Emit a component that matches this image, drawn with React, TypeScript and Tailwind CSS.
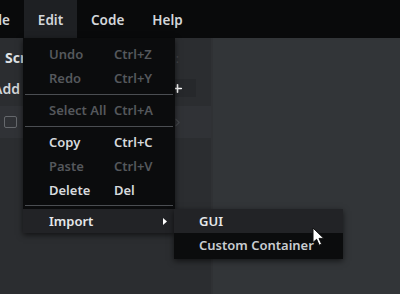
import { ChevronRight, Plus } from "lucide-react";

type MenuEntry =
  | { kind: "item"; label: string; shortcut?: string; disabled?: boolean }
  | { kind: "sep"; last?: boolean };

const editItems: MenuEntry[] = [
  { kind: "item", label: "Undo", shortcut: "Ctrl+Z", disabled: true },
  { kind: "item", label: "Redo", shortcut: "Ctrl+Y", disabled: true },
  { kind: "sep" },
  { kind: "item", label: "Select All", shortcut: "Ctrl+A", disabled: true },
  { kind: "sep" },
  { kind: "item", label: "Copy", shortcut: "Ctrl+C" },
  { kind: "item", label: "Paste", shortcut: "Ctrl+V", disabled: true },
  { kind: "item", label: "Delete", shortcut: "Del" },
  { kind: "sep", last: true }
];

function Cursor() {
  return (
    <svg width="14" height="20" viewBox="0 0 14 20" className="absolute left-[312px] top-[227px]">
      <path d="M1 1 L1 15.5 L4.6 12.3 L7.2 18.2 L9.6 17.1 L7 11.4 L11.8 11.4 Z" fill="#ffffff" stroke="#111" strokeWidth="1" strokeLinejoin="round" />
    </svg>
  );
}

export default function App() {
  return (
    <div className="relative h-[294px] w-[400px] overflow-hidden bg-[#323538] font-['Noto_Sans',sans-serif] text-[#d3d6da]">
      <div className="flex h-[38px] items-stretch bg-[#090a0b] text-[13.5px] font-semibold">
        <div className="ml-[-27px] flex w-[51px] items-center justify-center pt-[2px]">File</div>
        <div className="flex w-[53px] items-center justify-center bg-[#1e2023] pt-[2px]">Edit</div>
        <div className="flex items-center px-[14px] pt-[2px]">Code</div>
        <div className="flex items-center px-[14px] pt-[2px]">Help</div>
      </div>

      <div className="flex h-[256px]">
        <aside className="w-[211px] bg-[#2b2d30]">
          <div className="flex h-[31px] items-end justify-between pb-[1px] pl-[5px] pr-[32px]">
            <span className="text-[14px] font-bold text-[#dfe2e5]">Scripts</span>
            <span className="text-[12px] text-[#45484c]">:</span>
          </div>
          <div className="mt-[10px] flex h-[18px] items-center justify-between pr-[15px]">
            <span className="ml-[-7px] text-[14px] font-semibold">Add Script</span>
            <span className="flex h-[18px] w-[36px] items-center justify-end bg-[#26282b] pr-[12px] text-white">
              <Plus size={13} strokeWidth={3} />
            </span>
          </div>
          <div className="mt-[9px] flex h-[32px] items-center justify-between bg-[#303236] pl-[4px] pr-[27px]">
            <span className="h-[12px] w-[13px] rounded-[2px] border border-[#65686c]" />
            <ChevronRight size={13} className="text-[#46494d]" />
          </div>
        </aside>
        <div className="w-[2px] bg-[#2f3134]" />
        <main className="flex-1 bg-[#323538]" />
      </div>

      <div className="absolute left-[23px] top-[38px] w-[152px] bg-[#0b0c0d] pt-[4px] text-[13px] font-semibold shadow-[0_2px_6px_rgba(0,0,0,0.6)]">
        {editItems.map((entry, i) =>
          entry.kind === "sep" ? (
            <div key={i} className={`flex items-center px-[2px] ${entry.last ? "h-[7px]" : "h-[8px]"}`}>
              <div className="h-px w-full bg-[#4b4e52]" />
            </div>
          ) : (
            <div
              key={i}
              className={`flex h-[24px] items-center pl-[26px] pt-[1px] ${entry.disabled ? "text-[#55585c]" : "text-[#d7dadd]"}`}
            >
              <span className="w-[65px]">{entry.label}</span>
              <span>{entry.shortcut}</span>
            </div>
          )
        )}
        <div className="flex h-[24px] items-center justify-between bg-[#222326] pl-[26px] pr-[8px] pt-[1px] text-[#e6e8ea]">
          <span>Import</span>
          <svg width="4" height="7" viewBox="0 0 4 7">
            <path d="M0 0 L4 3.5 L0 7 Z" fill="#ffffff" />
          </svg>
        </div>
      </div>

      <div className="absolute left-[174px] top-[209px] w-[169px] bg-[#0b0c0d] text-[13px] font-semibold shadow-[0_2px_6px_rgba(0,0,0,0.6)]">
        <div className="flex h-[24px] items-center bg-[#222326] pl-[25px] pt-[1px] text-[#e6e8ea]">GUI</div>
        <div className="flex h-[26px] items-center pl-[25px] text-[#c9cdd1]">Custom Container</div>
      </div>

      <Cursor />
    </div>
  );
}
